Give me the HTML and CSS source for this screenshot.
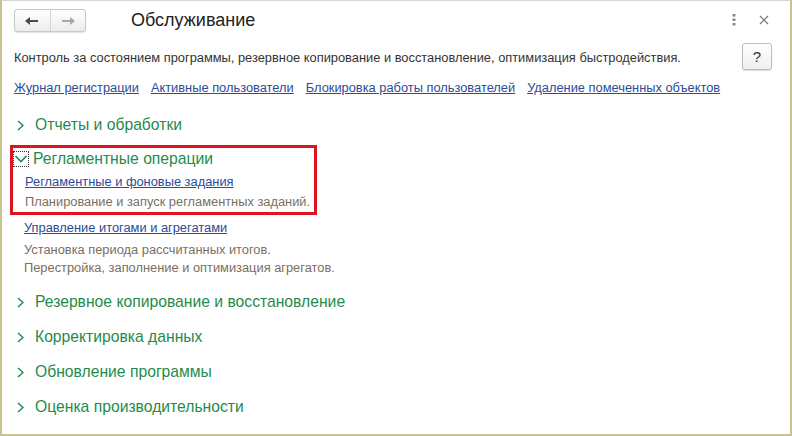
FILE: index.html
```html
<!DOCTYPE html>
<html lang="ru">
<head>
<meta charset="utf-8">
<link rel="stylesheet" href="styles.css">
</head>
<body>
<div class="window">
  <div class="header">
    <div class="navbtns">
      <div class="nb"><svg width="16" height="10" viewBox="0 0 16 10"><path d="M1 5 L6 1 L6 4 L14 4 L14 6 L6 6 L6 9 Z" fill="#4a4a4a"/></svg></div>
      <div class="nb"><svg width="16" height="10" viewBox="0 0 16 10"><path d="M15 5 L10 1 L10 4 L2 4 L2 6 L10 6 L10 9 Z" fill="#a8a8a8"/></svg></div>
    </div>
    <div class="title">Обслуживание</div>
    <div class="hicons">
      <svg class="kebab" width="4" height="12" viewBox="0 0 4 12"><rect x="0.5" y="0" width="3" height="2.5" fill="#888"/><rect x="0.5" y="4.5" width="3" height="2.5" fill="#888"/><rect x="0.5" y="9" width="3" height="2.5" fill="#888"/></svg>
      <svg class="close" width="10" height="10" viewBox="0 0 10 10"><path d="M1 1 L9 9 M9 1 L1 9" stroke="#777" stroke-width="1.2"/></svg>
    </div>
  </div>
  <div class="descrow">
    <div class="desc">Контроль за состоянием программы, резервное копирование и восстановление, оптимизация быстродействия.</div>
    <div class="help">?</div>
  </div>
  <div class="links">
    <a>Журнал регистрации</a>
    <a>Активные пользователи</a>
    <a>Блокировка работы пользователей</a>
    <a>Удаление помеченных объектов</a>
  </div>
  <div class="sections">
    <div class="sec"><svg class="chev" width="7" height="11" viewBox="0 0 7 11"><path d="M1 1 L6 5.5 L1 10" stroke="#1f8b4c" stroke-width="1.5" fill="none"/></svg>Отчеты и обработки</div>
    <div class="open">
      <div class="sec sec-open"><span class="chevbox"><svg width="14" height="10" viewBox="0 0 14 10"><path d="M1.5 2 L7 7.5 L12.5 2" stroke="#1f8b4c" stroke-width="1.6" fill="none"/></svg></span>Регламентные операции</div>
      <a class="sublink">Регламентные и фоновые задания</a>
      <div class="subdesc">Планирование и запуск регламентных заданий.</div>
    </div>
    <div class="item2">
      <a class="sublink">Управление итогами и агрегатами</a>
      <div class="subdesc">Установка периода рассчитанных итогов.<br>Перестройка, заполнение и оптимизация агрегатов.</div>
    </div>
    <div class="sec s-low"><svg class="chev" width="7" height="11" viewBox="0 0 7 11"><path d="M1 1 L6 5.5 L1 10" stroke="#1f8b4c" stroke-width="1.5" fill="none"/></svg>Резервное копирование и восстановление</div>
    <div class="sec s-low2"><svg class="chev" width="7" height="11" viewBox="0 0 7 11"><path d="M1 1 L6 5.5 L1 10" stroke="#1f8b4c" stroke-width="1.5" fill="none"/></svg>Корректировка данных</div>
    <div class="sec s-low2"><svg class="chev" width="7" height="11" viewBox="0 0 7 11"><path d="M1 1 L6 5.5 L1 10" stroke="#1f8b4c" stroke-width="1.5" fill="none"/></svg>Обновление программы</div>
    <div class="sec s-low2"><svg class="chev" width="7" height="11" viewBox="0 0 7 11"><path d="M1 1 L6 5.5 L1 10" stroke="#1f8b4c" stroke-width="1.5" fill="none"/></svg>Оценка производительности</div>
  </div>
</div>
</body>
</html>
```
FILE: styles.css
```css
html, body {
  margin: 0;
  padding: 0;
  background: #fff;
}
body {
  font-family: "Liberation Sans", Arial, sans-serif;
  width: 792px;
  height: 436px;
  overflow: hidden;
}
.window {
  box-sizing: border-box;
  width: 792px;
  height: 436px;
  border-top: 1px solid #d6d6d6;
  border-left: 2px solid #c9c48f;
  border-right: 2px solid #c9c48f;
  border-bottom: 2px solid #c9c48f;
  padding: 0 0 0 12px;
}
.header {
  display: flex;
  align-items: center;
  height: 40px;
  margin-top: -1px;
}
.navbtns {
  display: flex;
  margin-top: 1px;
  width: 72px;
  height: 23px;
  box-sizing: border-box;
  border: 1px solid #c8c8c8;
  border-radius: 3px;
  background: linear-gradient(#ffffff, #ececec);
  box-shadow: 0 1px 1px rgba(0,0,0,0.12);
}
.nb {
  flex: 1;
  display: flex;
  align-items: center;
  justify-content: center;
}
.nb + .nb {
  border-left: 1px solid #d4d4d4;
}
.title {
  margin-left: 45px;
  font-size: 18px;
  color: #222;
  flex: 1;
}
.hicons {
  display: flex;
  align-items: center;
  gap: 23px;
  margin-right: 21px;
}
.descrow {
  display: flex;
  align-items: center;
  height: 29px;
  margin-top: 3px;
}
.desc {
  flex: 1;
  font-size: 12.85px;
  color: #333;
}
.help {
  width: 30px;
  height: 27px;
  box-sizing: border-box;
  border: 1px solid #bdbdbd;
  border-radius: 3px;
  background: linear-gradient(#ffffff, #efefef);
  box-shadow: 0 1px 1px rgba(0,0,0,0.15);
  display: flex;
  align-items: center;
  justify-content: center;
  font-size: 15px;
  color: #333;
  margin-right: 18px;
  position: relative;
  top: -1px;
}
.links {
  display: flex;
  gap: 12px;
  margin-top: 8px;
  font-size: 12.85px;
}
.links a, .sublink {
  color: #2a4c98;
  text-decoration: underline;
}
.sections {
  margin-top: 20px;
}
.sec {
  font-size: 15.7px;
  color: #1f8b4c;
  display: flex;
  align-items: center;
  height: 20px;
}
.chev {
  margin: 0 11px 0 3px;
  flex: none;
}
.open {
  margin-top: 10px;
  margin-left: -4px;
  width: 307px;
  height: 70px;
  box-sizing: border-box;
  border: 3px solid #e0141e;
  padding: 1px 0 0 0;
}
.sec-open {
  height: 20px;
}
.chevbox {
  display: inline-flex;
  align-items: center;
  justify-content: center;
  width: 16px;
  height: 16px;
  box-sizing: border-box;
  border: 1px dotted #333;
  margin-right: 4px;
}
.open .sublink {
  display: block;
  margin: 5px 0 0 12px;
  font-size: 12.85px;
}
.subdesc {
  font-size: 12.85px;
  color: #7b6f5f;
  line-height: 18px;
}
.open .subdesc {
  margin: 4px 0 0 12px;
}
.item2 {
  margin: 5px 0 0 10px;
  font-size: 12.85px;
}
.item2 .sublink {
  display: block;
}
.item2 .subdesc {
  margin-top: 6px;
}
.s-low {
  margin-top: 15px;
}
.s-low2 {
  margin-top: 15px;
}
```
